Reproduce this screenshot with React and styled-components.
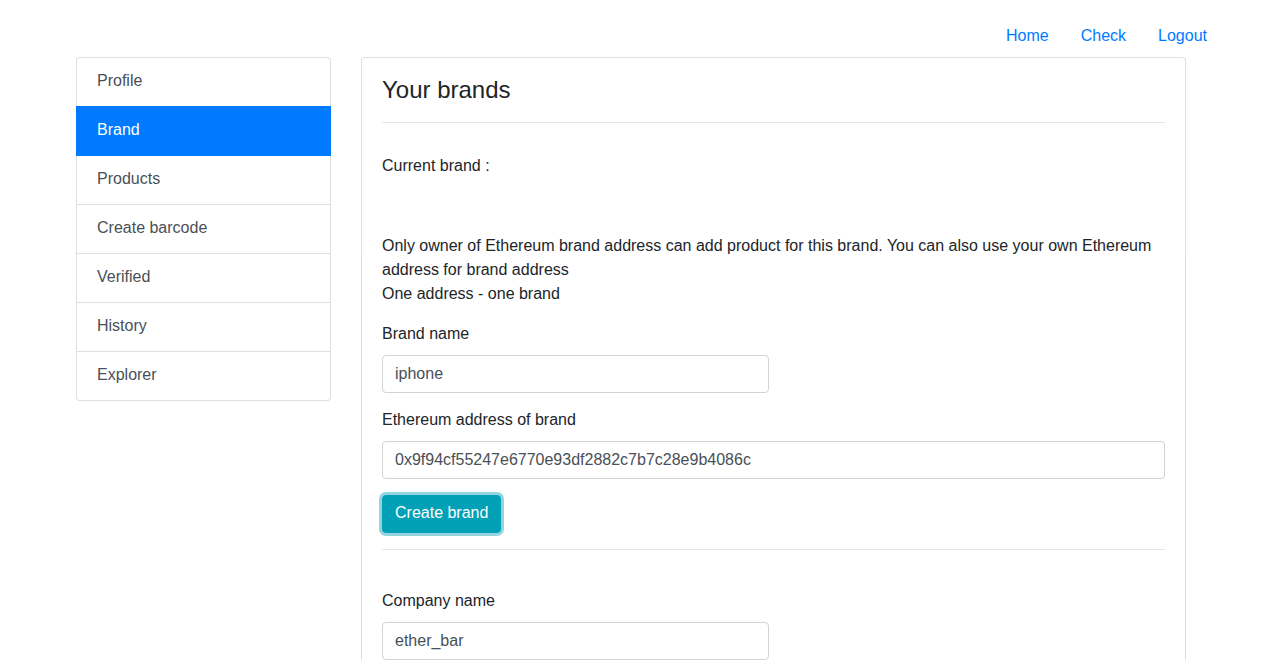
import React from "react"
import styled, { createGlobalStyle } from "styled-components"

const GlobalStyle = createGlobalStyle`
  * { box-sizing: border-box; }
  body {
    margin: 0;
    font-family: "Liberation Sans", Arial, sans-serif;
    font-size: 16px;
    line-height: 1.5;
    color: #212529;
    background: #fff;
  }
`

const Header = styled.nav`
  display: flex;
  justify-content: flex-end;
  padding: 16px 39px 1px 0;
`

const NavLink = styled.a`
  padding: 8px 16px;
  color: #007bff;
  text-decoration: none;
  line-height: 24px;
  cursor: pointer;
`

const Container = styled.div`
  width: 1140px;
  margin: 0 auto;
  display: flex;
`

const SideCol = styled.div`
  width: 285px;
  padding: 0 15px;
`

const MainCol = styled.div`
  width: 855px;
  padding: 0 15px;
`

const ListGroup = styled.div`
  display: flex;
  flex-direction: column;
`

const ListItem = styled.a`
  position: relative;
  display: block;
  padding: 11px 20px 13px;
  margin-bottom: -1px;
  line-height: 24px;
  color: ${p => (p.active ? "#fff" : "#495057")};
  background: ${p => (p.active ? "#007bff" : "#fff")};
  border: 1px solid ${p => (p.active ? "#007bff" : "rgba(0, 0, 0, 0.125)")};
  z-index: ${p => (p.active ? 2 : 1)};
  text-decoration: none;
  cursor: pointer;

  &:first-child {
    border-radius: 4px 4px 0 0;
  }
  &:last-child {
    border-radius: 0 0 4px 4px;
    margin-bottom: 0;
  }
`

const Card = styled.div`
  border: 1px solid rgba(0, 0, 0, 0.125);
  border-bottom: none;
  border-radius: 4px 4px 0 0;
  padding: 18px 20px 0;
  min-height: 603px;
`

const Title = styled.h4`
  margin: 0;
  font-size: 24px;
  font-weight: 500;
  line-height: 28.8px;
`

const Rule = styled.hr`
  margin: ${p => p.top || 16}px 0 0;
  border: 0;
  border-top: 1px solid rgba(0, 0, 0, 0.1);
`

const Text = styled.p`
  margin: ${p => p.top || 0}px 0 0;
  line-height: 24px;
`

const Group = styled.div`
  margin-top: ${p => p.top || 16}px;
`

const Label = styled.label`
  display: block;
  line-height: 24px;
  margin-bottom: 9px;
`

const Input = styled.input`
  display: block;
  width: ${p => (p.full ? "100%" : "387px")};
  height: 38px;
  padding: 6px 12px;
  font-family: inherit;
  font-size: 16px;
  color: #495057;
  border: 1px solid #ced4da;
  border-radius: 4px;
  outline: none;
`

const Button = styled.button`
  display: block;
  margin-top: 16px;
  padding: 5px 12px 7px;
  font-family: inherit;
  font-size: 16px;
  line-height: 24px;
  color: #fff;
  background: #00a1b6;
  border: 1px solid #00a1b6;
  border-radius: 4px;
  box-shadow: 0 0 0 3px rgba(58, 176, 195, 0.55);
  cursor: pointer;
`

const menu = ["Profile", "Brand", "Products", "Create barcode", "Verified", "History", "Explorer"]

export default function App() {
  return (
    <>
      <GlobalStyle />
      <Header>
        <NavLink>Home</NavLink>
        <NavLink>Check</NavLink>
        <NavLink>Logout</NavLink>
      </Header>
      <Container>
        <SideCol>
          <ListGroup>
            {menu.map(m => (
              <ListItem key={m} active={m === "Brand"}>
                {m}
              </ListItem>
            ))}
          </ListGroup>
        </SideCol>
        <MainCol>
          <Card>
            <Title>Your brands</Title>
            <Rule top={17} />
            <Text top={31}>Current brand :</Text>
            <Text top={56}>
              Only owner of Ethereum brand address can add product for this brand. You can also use your own Ethereum
              address for brand address
              <br />
              One address - one brand
            </Text>
            <Group>
              <Label>Brand name</Label>
              <Input defaultValue="iphone" />
            </Group>
            <Group top={15}>
              <Label>Ethereum address of brand</Label>
              <Input full defaultValue="0x9f94cf55247e6770e93df2882c7b7c28e9b4086c" />
            </Group>
            <Button>Create brand</Button>
            <Rule top={16} />
            <Group top={39}>
              <Label>Company name</Label>
              <Input defaultValue="ether_bar" />
            </Group>
          </Card>
        </MainCol>
      </Container>
    </>
  )
}
